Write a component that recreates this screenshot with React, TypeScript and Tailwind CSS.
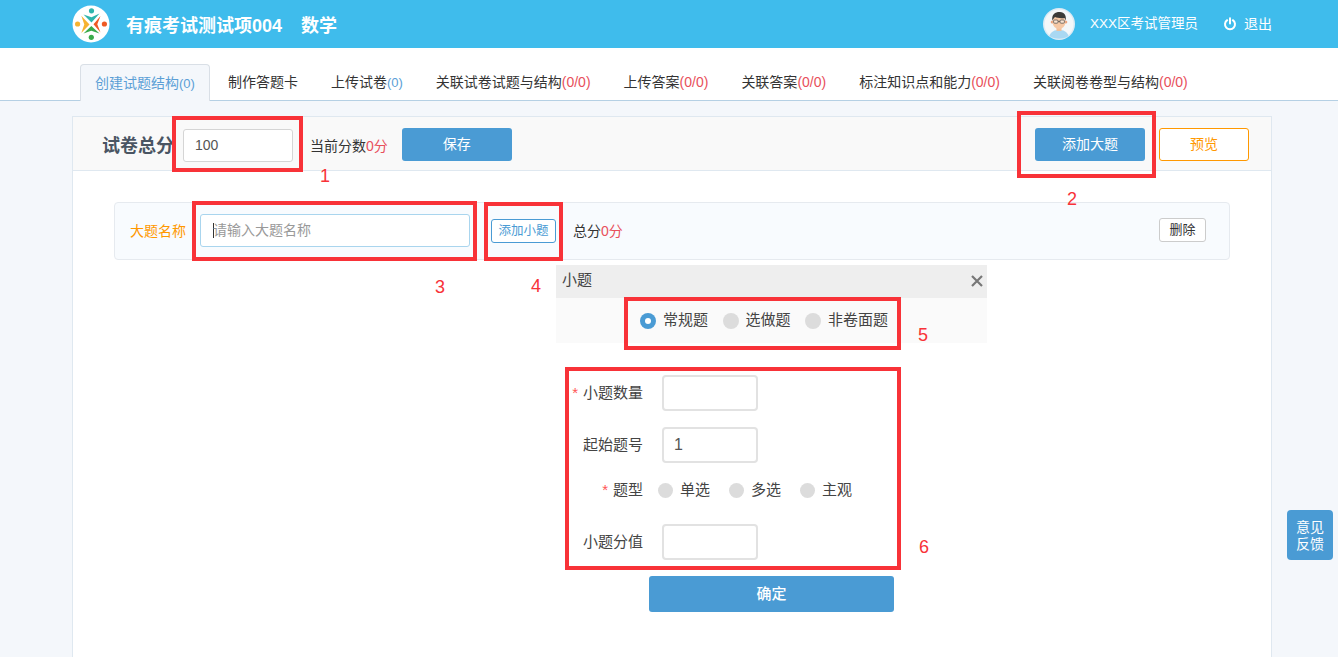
const tabs = [
  { label: "创建试题结构", count: "(0)", active: true },
  { label: "制作答题卡", count: "" },
  { label: "上传试卷", count: "(0)" },
  { label: "关联试卷试题与结构", count: "(0/0)", red: true },
  { label: "上传答案", count: "(0/0)", red: true },
  { label: "关联答案", count: "(0/0)", red: true },
  { label: "标注知识点和能力", count: "(0/0)", red: true },
  { label: "关联阅卷卷型与结构", count: "(0/0)", red: true },
];

const marks = [
  { n: "1", box: "left-[172px] top-[116px] w-[131px] h-[56px]", num: "left-[320px] top-[166px]" },
  { n: "2", box: "left-[1017px] top-[111px] w-[139px] h-[67px]", num: "left-[1067px] top-[189px]" },
  { n: "3", box: "left-[192px] top-[201px] w-[285px] h-[60px]", num: "left-[435px] top-[277px]" },
  { n: "4", box: "left-[484px] top-[202px] w-[79px] h-[59px]", num: "left-[531px] top-[276px]" },
  { n: "5", box: "left-[624px] top-[297px] w-[277px] h-[53px]", num: "left-[918px] top-[325px]" },
  { n: "6", box: "left-[565px] top-[367px] w-[336px] h-[203px]", num: "left-[919px] top-[537px]" },
];

const Logo = () => (
  <svg viewBox="0 0 38 38" className="w-[38px] h-[38px] shrink-0">
    <circle cx="19" cy="19" r="18.5" fill="#fff" />
    <circle cx="19.5" cy="5.8" r="2.6" fill="#2fb5ac" />
    <path d="M11.5 9.5 L19.5 12.3 L27.5 8.5 L19.5 17.5 Z" fill="#2fb5ac" />
    <circle cx="5.6" cy="19" r="2.6" fill="#f6b330" />
    <path d="M9.3 10.7 L17.5 19.5 L9.3 28 L12.3 19.5 Z" fill="#f6b330" />
    <circle cx="32.4" cy="19" r="2.6" fill="#ef5a24" />
    <path d="M28.5 11 L21.5 19.3 L28.5 27.5 L25.3 19.3 Z" fill="#ef5a24" />
    <circle cx="19.3" cy="32.3" r="2.6" fill="#3aaa4b" />
    <path d="M11.5 28.5 L19.3 21 L27.5 28.5 L19.3 25.7 Z" fill="#3aaa4b" />
  </svg>
);

const Avatar = () => (
  <svg viewBox="0 0 32 32" className="w-8 h-8 shrink-0">
    <circle cx="16" cy="16" r="16" fill="#dcebf5" />
    <circle cx="16" cy="16" r="14.5" fill="#f4f7f9" />
    <path d="M6.5 28 C8 23 12 22 16 22 C20 22 24 23 25.5 28 C21 31.5 11 31.5 6.5 28 Z" fill="#a9d8f2" />
    <rect x="13.5" y="18" width="5" height="5" fill="#f1c09b" />
    <circle cx="9.3" cy="14" r="1.6" fill="#eba27c" />
    <circle cx="22.7" cy="14" r="1.6" fill="#eba27c" />
    <ellipse cx="16" cy="14" rx="6.4" ry="7" fill="#f6c8a5" />
    <path d="M9.3 12.5 C8.5 6 12.5 3.8 17 4 C21.5 4.2 23.5 7.5 22.7 12.5 L21.5 10 C18 10.5 14 10 12 9 C11 10 10.5 11 9.3 12.5 Z" fill="#3b3a38" />
    <rect x="10.6" y="12" width="4.4" height="3.2" rx="1" fill="#fff" fillOpacity="0.5" stroke="#4a4a4a" strokeWidth="0.7" />
    <rect x="17" y="12" width="4.4" height="3.2" rx="1" fill="#fff" fillOpacity="0.5" stroke="#4a4a4a" strokeWidth="0.7" />
    <path d="M15 13.4 H17" stroke="#4a4a4a" strokeWidth="0.7" />
  </svg>
);

const Radio = ({ on, label, big }: { on?: boolean; label: string; big?: boolean }) => (
  <label className="flex items-center gap-[7px] text-[15px] text-[#444]">
    {on ? (
      <span className="w-4 h-4 rounded-full bg-[#4a9bd4] flex items-center justify-center">
        <span className="w-[6px] h-[6px] rounded-full bg-white" />
      </span>
    ) : (
      <span className={big ? "w-4 h-4 rounded-full bg-[#dcdcdc]" : "w-[15px] h-[15px] rounded-full bg-[#dcdcdc]"} />
    )}
    {label}
  </label>
);

const Field = ({ label, star, value }: { label: string; star?: boolean; value?: string }) => (
  <div className="flex items-center h-9">
    <div className="w-[87px] text-right text-[15px] text-[#444]">
      {star && <span className="text-[#f55] mr-[5px]">*</span>}
      {label}
    </div>
    <div className="ml-[19px] w-[96px] h-9 bg-white border-2 border-[#e2e2e2] rounded-[4px] pl-[10px] flex items-center text-[16px] text-[#555]">
      {value}
    </div>
  </div>
);

export default function App() {
  return (
    <div className="relative h-[657px] overflow-hidden bg-[#f4f7fb] font-['Liberation_Sans','Noto_Sans_CJK_SC',sans-serif] text-[#333]">
      <header className="h-12 bg-[#3fbcec] pl-[72px] pr-[66px] flex items-center text-white">
        <Logo />
        <h1 className="ml-4 mt-[5px] text-[18px] font-bold">有痕考试测试项004</h1>
        <span className="ml-[19px] mt-[5px] text-[18px] font-bold">数学</span>
        <div className="ml-auto flex items-center text-[13.5px]">
          <Avatar />
          <span className="ml-[15px]">XXX区考试管理员</span>
          <svg viewBox="0 0 14 14" className="ml-[25px] w-[14px] h-[14px]" fill="none" stroke="#fff" strokeWidth="2" strokeLinecap="round">
            <path d="M4.2 3.2 A5 5 0 1 0 9.8 3.2" />
            <path d="M7 1.2 V6.6" />
          </svg>
          <span className="ml-[7px] text-[14px]">退出</span>
        </div>
      </header>

      <nav className="h-[53px] bg-white border-b border-[#b5d0e4] pl-20 flex items-end">
        {tabs.map((t) => (
          <div
            key={t.label}
            className={
              t.active
                ? "h-[37px] -mb-px mr-[3px] px-[14px] pt-px flex items-center text-[14px] text-[#5b9fd6] bg-[#f4f7fb] border border-[#d9dfe6] border-b-0 rounded-t-[4px]"
                : "h-[37px] mr-[3px] px-[15px] pt-[2px] flex items-center text-[14px] text-[#333]"
            }
          >
            {t.label}
            <span className={t.active ? "text-[13px]" : t.red ? "text-[#e8505b]" : "text-[13px] text-[#5b9fd6]"}>{t.count}</span>
          </div>
        ))}
      </nav>

      <main className="ml-[72px] mt-[15px] w-[1200px] h-[600px] bg-white border border-[#dfe8f0]">
        <div className="h-[54px] bg-[#f9f9f9] border-b border-[#dfe8f0] pl-[29px] pr-[22px] pt-[2px] flex items-center">
          <span className="mt-[4px] text-[18px] font-bold text-[#4a5563] whitespace-nowrap w-[72px]">试卷总分</span>
          <div className="ml-[9px] mt-[2px] w-[110px] h-[33px] bg-white border border-[#d5d5d5] rounded-[3px] pl-[11px] flex items-center text-[14px] text-[#555]">100</div>
          <span className="ml-[17px] mt-[4px] text-[14px]">
            当前分数<span className="text-[#e8505b]">0分</span>
          </span>
          <button className="ml-[14px] w-[110px] h-[33px] bg-[#4a9bd4] rounded-[3px] text-white text-[14px]">保存</button>
          <button className="ml-auto w-[110px] h-[33px] bg-[#4a9bd4] rounded-[3px] text-white text-[14px]">添加大题</button>
          <button className="ml-[14px] w-[90px] h-[33px] bg-white border border-[#ff9800] rounded-[3px] text-[#ff9800] text-[14px]">预览</button>
        </div>

        <div className="mt-[31px] ml-[41px] w-[1116px] h-[58px] bg-[#f8fbfe] border border-[#e6eaef] rounded-[4px] flex items-center pl-[15px]">
          <span className="text-[14px] text-[#ff9800] w-[56px]">大题名称</span>
          <div className="ml-[14px] mb-[2px] w-[270px] h-[33px] bg-white border border-[#a9d5ee] rounded-[3px] pl-3 flex items-center text-[14px] text-[#999]">
            <span className="w-px -mr-px h-[15px] bg-[#333]" />请输入大题名称
          </div>
          <button className="ml-[21px] w-[65px] h-6 bg-white border border-[#4a9bd4] rounded-[3px] text-[#4a9bd4] text-[12.5px]">添加小题</button>
          <span className="ml-[17px] text-[14px]">
            总分<span className="text-[#e8505b]">0分</span>
          </span>
          <button className="ml-auto mr-[23px] mb-[2px] w-[47px] h-6 bg-white border border-[#ccc] rounded-[3px] text-[13px]">删除</button>
        </div>

        <section className="ml-[483px] mt-[5px] w-[431px]">
          <div className="h-[33px] bg-[#eee] pl-[6px] pr-[3px] pb-[2px] flex items-center justify-between text-[15px] text-[#444]">
            小题
            <svg viewBox="0 0 14 14" className="w-[14px] h-[14px]" fill="none" stroke="#777" strokeWidth="2.2">
              <path d="M2 2 L12 12 M12 2 L2 12" />
            </svg>
          </div>
          <div className="h-[45px] bg-[#fafafa] pl-[84px] flex items-center gap-[14.5px]">
            <Radio big on label="常规题" />
            <Radio big label="选做题" />
            <Radio big label="非卷面题" />
          </div>
          <div className="mt-8 flex flex-col">
            <Field star label="小题数量" />
            <div className="mt-4">
              <Field label="起始题号" value="1" />
            </div>
            <div className="mt-[17px] h-[20px] flex items-center">
              <div className="w-[87px] text-right text-[15px] text-[#444]">
                <span className="text-[#f55] mr-[5px]">*</span>题型
              </div>
              <div className="ml-[15px] flex items-center gap-[19px]">
                <Radio label="单选" />
                <Radio label="多选" />
                <Radio label="主观" />
              </div>
            </div>
            <div className="mt-6">
              <Field label="小题分值" />
            </div>
          </div>
          <button className="block ml-[93px] mt-4 w-[245px] h-9 bg-[#4a9bd4] rounded-[3px] text-white text-[15px] font-medium">确定</button>
        </section>
      </main>

      {marks.map((m) => (
        <div key={m.n}>
          <div className={`absolute border-4 border-[#f83238] ${m.box}`} />
          <span className={`absolute text-[18px] leading-[20px] text-[#f83238] ${m.num}`}>{m.n}</span>
        </div>
      ))}

      <div className="absolute left-[1287px] top-[510px] w-[46px] h-[50px] pt-px bg-[#4a9bd4] rounded-[4px] text-white text-[14px] leading-[17px] flex items-center justify-center text-center">
        意见
        <br />
        反馈
      </div>
    </div>
  );
}
